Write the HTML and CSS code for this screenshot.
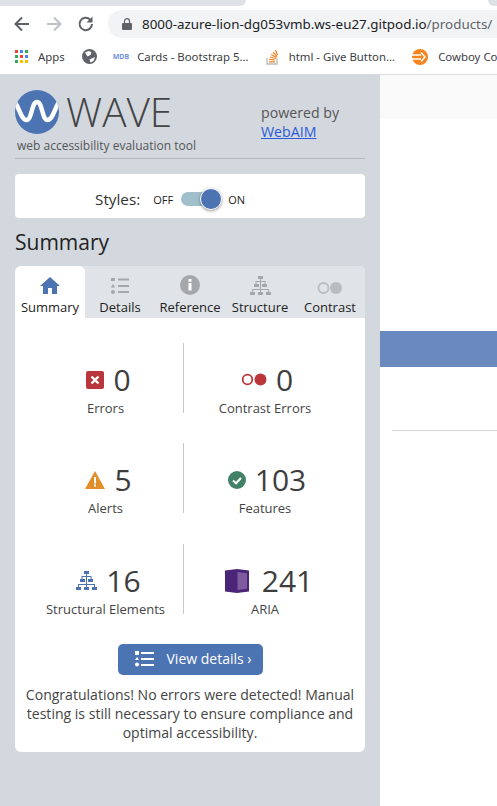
FILE: index.html
```html
<!DOCTYPE html>
<html>
<head>
    <title>WAVE</title>
    <link rel="stylesheet" href="styles.css">
</head>
<body>
    <div class="tabstrip">
        <div class="tab"></div>
        <div class="tab2"></div>
    </div>
    <div class="toolbar">
        <svg class="nav" width="20" height="20" viewBox="0 0 20 20"><path d="M17 10H4M10 3.500 3.500 10l6.500 6.500" fill="none" stroke="#5f6368" stroke-width="2"/></svg>
        <svg class="nav" width="20" height="20" viewBox="0 0 20 20"><path d="M3 10h13M10 3.500l6.500 6.500-6.500 6.500" fill="none" stroke="#bdc1c6" stroke-width="2"/></svg>
        <svg class="nav" width="20" height="20" viewBox="0 0 20 20"><path d="M16 10a6.200 6.200 0 1 1-1.800-4.400" fill="none" stroke="#5f6368" stroke-width="2"/><path d="M16.500 2.500v6h-6z" fill="#5f6368"/></svg>
        <div class="omnibox">
            <svg width="10" height="12" viewBox="0 0 10 12"><path d="M1 5h8a1 1 0 0 1 1 1v5a1 1 0 0 1-1 1H1a1 1 0 0 1-1-1V6a1 1 0 0 1 1-1z" fill="#5f6368"/><path d="M2.500 5V3.200a2.500 2.500 0 0 1 5 0V5" fill="none" stroke="#5f6368" stroke-width="1.200"/></svg>
            <span class="url">8000-azure-lion-dg053vmb.ws-eu27.gitpod.io<span class="url-path">/products/</span></span>
        </div>
    </div>
    <div class="bookmarks">
        <div class="mark">
            <svg width="13" height="13" viewBox="0 0 13 13">
                <rect x="0" y="0" width="3" height="3" fill="#ea4335"/><rect x="5" y="0" width="3" height="3" fill="#4285f4"/><rect x="10" y="0" width="3" height="3" fill="#34a853"/>
                <rect x="0" y="5" width="3" height="3" fill="#34a853"/><rect x="5" y="5" width="3" height="3" fill="#ea4335"/><rect x="10" y="5" width="3" height="3" fill="#4285f4"/>
                <rect x="0" y="10" width="3" height="3" fill="#34a853"/><rect x="5" y="10" width="3" height="3" fill="#fbbc05"/><rect x="10" y="10" width="3" height="3" fill="#fbbc05"/>
            </svg>
            <span>Apps</span>
        </div>
        <div class="mark">
            <svg width="15" height="15" viewBox="0 0 15 15"><circle cx="7.500" cy="7.500" r="7.500" fill="#5f6368"/><path d="M3 3.500l3.500-1.500 3 1-1 3-3 1.500zM7.500 10.500l5.500-2.500-1.500 4-3 1.500z" fill="#fff"/></svg>
        </div>
        <div class="mark mark-mdb">
            <span class="mdb">MDB</span>
            <span>Cards - Bootstrap 5...</span>
        </div>
        <div class="mark">
            <svg width="13" height="16" viewBox="0 0 13 16"><path d="M1 9v6h10V9" fill="none" stroke="#bcbbbb" stroke-width="1.300"/><path d="M3 12.800h6M3.200 10.400l6 .6M3.900 8l5.800 1.500M5.200 5.500l5.200 3M7 3.200l4 4.300M9.500 1l2 5" fill="none" stroke="#f48024" stroke-width="1.200"/></svg>
            <span>html - Give Button...</span>
        </div>
        <div class="mark">
            <svg width="16" height="16" viewBox="0 0 16 16"><circle cx="8" cy="8" r="8" fill="#f6851f"/><path d="M0 6h9M0 10h9M9 3.500 13 8l-4 4.500" fill="none" stroke="#fff" stroke-width="1.500"/></svg>
            <span>Cowboy Coding</span>
        </div>
    </div>

    <div class="main">
        <div class="sidebar">
            <div class="brand">
                <div class="brand-left">
                    <div class="logo-row">
                        <svg class="logo" width="44" height="44" viewBox="0 0 44 44">
                            <clipPath id="logoClip"><circle cx="22" cy="22" r="22"/></clipPath>
                            <circle cx="22" cy="22" r="22" fill="#4c74b3"/>
                            <path clip-path="url(#logoClip)" d="M0 12C5 20 6.500 30 11.500 30 17 30 16.500 12 22 12 27.500 12 27 30 32.500 30 37.500 30 39 20 44 12" fill="none" stroke="#fff" stroke-width="4.500"/>
                        </svg>
                        <span class="wave">WAVE</span>
                    </div>
                    <div class="tagline">web accessibility evaluation tool</div>
                </div>
                <div class="powered">powered by<br><a href="#">WebAIM</a></div>
            </div>

            <div class="styles-box">
                <span class="styles-label">Styles:</span>
                <span class="switch-text">OFF</span>
                <span class="switch"><span class="knob"></span></span>
                <span class="switch-text">ON</span>
            </div>

            <h1>Summary</h1>

            <div class="panel">
                <div class="tabs">
                    <div class="tab-item active">
                        <svg width="20" height="18" viewBox="0 0 20 18"><path d="M10 0 0 9h3v8h5v-6h4v6h5V9h3z" fill="#4c74b3"/></svg>
                        <span>Summary</span>
                    </div>
                    <div class="tab-item">
                        <svg width="20" height="18" viewBox="0 0 20 18"><g fill="#a4a7ab"><rect x="1" y="1" width="4" height="3"/><path d="M3 7l2.200 3.500H.8z"/><circle cx="3" cy="15" r="2"/><rect x="8" y="1.500" width="11" height="2"/><rect x="8" y="8" width="11" height="2"/><rect x="8" y="14" width="11" height="2"/></g></svg>
                        <span>Details</span>
                    </div>
                    <div class="tab-item">
                        <svg width="20" height="20" viewBox="0 0 20 20"><circle cx="10" cy="10" r="10" fill="#a4a7ab"/><rect x="8.500" y="8" width="3" height="7.500" fill="#fff"/><rect x="8.500" y="4" width="3" height="2.800" fill="#fff"/></svg>
                        <span>Reference</span>
                    </div>
                    <div class="tab-item">
                        <svg width="21" height="19" viewBox="0 0 21 19"><use href="#tree" fill="#a4a7ab"/></svg>
                        <span>Structure</span>
                    </div>
                    <div class="tab-item">
                        <svg width="26" height="14" viewBox="0 0 26 14"><circle cx="6.500" cy="7" r="5" fill="none" stroke="#b9bcc0" stroke-width="1.800"/><circle cx="19" cy="7" r="6" fill="#b9bcc0"/></svg>
                        <span>Contrast</span>
                    </div>
                </div>

                <div class="stats">
                    <div class="stat">
                        <div class="stat-top">
                            <svg width="18" height="18" viewBox="0 0 18 18"><rect width="18" height="18" rx="2" fill="#b9363b"/><path d="M5.500 5.500l7 7M12.500 5.500l-7 7" stroke="#fff" stroke-width="2.400"/></svg>
                            <span class="num">0</span>
                        </div>
                        <div class="stat-label">Errors</div>
                    </div>
                    <div class="stat">
                        <div class="stat-top">
                            <svg width="26" height="13" viewBox="0 0 26 13"><circle cx="6.500" cy="6.500" r="4.800" fill="none" stroke="#b9363b" stroke-width="1.800"/><circle cx="19.500" cy="6.500" r="6" fill="#b9363b"/></svg>
                            <span class="num">0</span>
                        </div>
                        <div class="stat-label">Contrast Errors</div>
                    </div>
                    <div class="stat">
                        <div class="stat-top">
                            <svg width="20" height="18" viewBox="0 0 20 18"><path d="M10 0 20 18H0z" fill="#e28f2a"/><rect x="9" y="6" width="2" height="6.500" fill="#fff"/><rect x="9" y="13.500" width="2" height="2" fill="#fff"/></svg>
                            <span class="num">5</span>
                        </div>
                        <div class="stat-label">Alerts</div>
                    </div>
                    <div class="stat">
                        <div class="stat-top">
                            <svg width="18" height="18" viewBox="0 0 18 18"><circle cx="9" cy="9" r="9" fill="#428168"/><path d="M5 9.500l3 2.800 5-5.300" fill="none" stroke="#fff" stroke-width="2"/></svg>
                            <span class="num">103</span>
                        </div>
                        <div class="stat-label">Features</div>
                    </div>
                    <div class="stat">
                        <div class="stat-top">
                            <svg width="21" height="19" viewBox="0 0 21 19"><use href="#tree" fill="#4c74b3"/></svg>
                            <span class="num">16</span>
                        </div>
                        <div class="stat-label">Structural Elements</div>
                    </div>
                    <div class="stat">
                        <div class="stat-top aria-top">
                            <svg width="24" height="24" viewBox="0 0 24 24"><path d="M0 1.500 12 0l12 1.500v21L12 24 0 22.500z" fill="#4b2577"/><path d="M12.500 3l9.500 1.200v15.600L12.500 21z" fill="#7f5c9f"/></svg>
                            <span class="num">241</span>
                        </div>
                        <div class="stat-label">ARIA</div>
                    </div>
                </div>

                <div class="btn-row">
                    <a class="btn" href="#">
                        <svg width="19" height="16" viewBox="0 0 19 16"><g fill="#fff"><rect x="0" y="0" width="4" height="4"/><path d="M2 6l2 3H0z"/><circle cx="2" cy="13.500" r="2"/><rect x="6" y="1" width="13" height="2"/><rect x="6" y="7" width="13" height="2"/><rect x="6" y="13" width="13" height="2"/></g></svg>
                        <span>View details ›</span>
                    </a>
                </div>
                <p class="congrats">Congratulations! No errors were detected! Manual testing is still necessary to ensure compliance and optimal accessibility.</p>
            </div>
        </div>

        <div class="content">
            <div class="content-top"></div>
            <div class="band"></div>
            <div class="rule"></div>
        </div>
    </div>

    <svg class="defs" width="0" height="0">
        <symbol id="tree" viewBox="0 0 21 19">
            <path d="M8 0h5v3H8zM4 8h5v3H4zM12 8h5v3h-5zM0 16h5v3H0zM8 16h5v3H8zM16 16h5v3h-5z"/>
            <path d="M10 3h1v2h4.500v3h-1V6h-3.500v7h8v3h-1v-2h-7v2h-1v-2h-7v2h-1v-3h8V6H6.500v2h-1V5H10z"/>
        </symbol>
    </svg>
</body>
</html>
```
FILE: styles.css
```css
* {
    box-sizing: border-box;
}

html, body {
    margin: 0;
    height: 100%;
    overflow: hidden;
}

body {
    width: 497px;
    height: 806px;
    display: flex;
    flex-direction: column;
    font-family: "Open Sans", "Noto Sans", sans-serif;
    background-color: #fff;
}

.defs {
    position: absolute;
}

/* browser chrome */
.tabstrip {
    height: 6px;
    flex: none;
    display: flex;
    justify-content: space-between;
}

.tab {
    width: 246px;
    background-color: #dee1e6;
    border-radius: 0 0 6px 0;
}

.tab2 {
    width: 9px;
    background-color: #dee1e6;
    border-radius: 0 0 0 6px;
}

.toolbar {
    height: 33px;
    flex: none;
    display: flex;
    align-items: flex-start;
    padding: 4px 0 0 12px;
    gap: 12px;
}

.nav {
    flex: none;
    margin-top: 4px;
}

.omnibox {
    flex: 1;
    min-width: 0;
    height: 28px;
    padding-left: 14px;
    display: flex;
    align-items: center;
    gap: 10px;
    background-color: #f1f3f4;
    border-radius: 14px 0 0 14px;
    white-space: nowrap;
}

.url {
    font-family: "Noto Sans", sans-serif;
    font-size: 13.400px;
    color: #202124;
}

.url-path {
    color: #5f6368;
}

.bookmarks {
    height: 36px;
    flex: none;
    display: flex;
    align-items: center;
    padding-left: 15px;
    gap: 17px;
    font-family: "Noto Sans", sans-serif;
    font-size: 11.400px;
    color: #3c4043;
    white-space: nowrap;
    overflow: hidden;
    border-bottom: 1px solid #dadce0;
}

.mark {
    display: flex;
    align-items: center;
    gap: 10px;
    flex: none;
}

.mark-mdb {
    gap: 8px;
    margin-left: -1px;
}

.mdb {
    font-size: 7px;
    font-weight: 700;
    color: #6f93dc;
}

/* wave sidebar */
.main {
    flex: 1;
    display: flex;
    min-height: 0;
}

.sidebar {
    width: 380px;
    flex: none;
    padding: 15px 15px 0;
    background-color: #d3d8df;
}

.brand {
    height: 69px;
    display: flex;
    justify-content: space-between;
    border-bottom: 1px solid #b3b7bc;
}

.logo-row {
    display: flex;
    align-items: center;
    gap: 7px;
    height: 44px;
}

.logo {
    flex: none;
}

.wave {
    font-size: 40.500px;
    font-weight: 300;
    color: #444;
    line-height: 44px;
}

.tagline {
    margin: 3px 0 0 2px;
    font-size: 12px;
    line-height: 18px;
    color: #555;
}

.powered {
    width: 104px;
    padding-top: 13px;
    font-size: 14.200px;
    line-height: 19px;
    color: #555;
}

.powered a {
    color: #2a5bd7;
}

.styles-box {
    height: 44px;
    margin-top: 15px;
    padding: 6px 0 0 80px;
    display: flex;
    align-items: center;
    background-color: #fff;
    border-radius: 4px;
}

.styles-label {
    font-size: 15.300px;
    color: #333;
    margin-right: 13px;
}

.switch-text {
    font-size: 11px;
    color: #222;
}

.switch {
    width: 40px;
    height: 14px;
    margin: 0 7px 0 8px;
    position: relative;
    background-color: #a1c0cb;
    border-radius: 7px;
}

.knob {
    position: absolute;
    right: -1px;
    top: -4px;
    width: 22px;
    height: 22px;
    background-color: #4c74b3;
    border: 1px solid #fff;
    border-radius: 50%;
    box-shadow: 0 1px 3px rgba(0, 0, 0, .4);
}

h1 {
    margin: 9px 0 9px;
    font-size: 21px;
    font-weight: 400;
    line-height: 30px;
    color: #222;
}

.panel {
    height: 486px;
    background-color: #fff;
    border-radius: 6px;
    overflow: hidden;
}

.tabs {
    height: 52px;
    display: flex;
    background-color: #e0e3e7;
}

.tab-item {
    flex: 1;
    display: flex;
    flex-direction: column;
    align-items: center;
    justify-content: flex-end;
    gap: 4px;
    padding-bottom: 2px;
    font-size: 13px;
    line-height: 17px;
    color: #222;
}

.tab-item.active {
    background-color: #fff;
    border-radius: 6px 6px 0 0;
}

.stats {
    display: grid;
    grid-template-columns: 169px 181px;
    grid-template-rows: 70px 70px 70px;
    row-gap: 30px;
    padding-top: 25px;
}

.stat {
    height: 70px;
    display: flex;
    flex-direction: column;
    align-items: center;
}

.stat:nth-child(odd) {
    padding-left: 13px;
    border-right: 1px solid #c8c8c8;
}

.stat:nth-child(even) {
    padding-right: 19px;
}

.stat:nth-child(n+5) {
    margin-top: 1px;
}

.stat-top {
    flex: none;
    height: 57px;
    padding-top: 16px;
    margin-left: 6px;
    display: flex;
    align-items: center;
    gap: 9px;
}

.stat:nth-child(even) .stat-top {
    margin-left: 4px;
}

.stat:nth-child(even) .aria-top {
    margin-left: 8px;
    gap: 13px;
}

.num {
    font-size: 30px;
    line-height: 38px;
    color: #3d3d3d;
}

.stat-label {
    flex: none;
    font-size: 13px;
    line-height: 17px;
    color: #444;
}

.btn-row {
    margin-top: 31px;
    display: flex;
    justify-content: center;
}

.btn {
    width: 145px;
    height: 31px;
    display: flex;
    align-items: center;
    gap: 13px;
    padding: 0 0 2px 17px;
    font-size: 14px;
    color: #fff;
    text-decoration: none;
    background-color: #4c74b3;
    border-radius: 5px;
}

.congrats {
    margin: 10px 8px 0;
    text-align: center;
    font-size: 14.050px;
    line-height: 19px;
    color: #444;
}

/* page behind */
.content {
    flex: 1;
    min-width: 0;
}

.content-top {
    height: 44px;
    background-color: #fafafa;
}

.band {
    height: 36px;
    margin-top: 212px;
    background-color: #6a8abf;
}

.rule {
    height: 1px;
    margin: 63px 0 0 12px;
    background-color: #d5d5d5;
}
```
